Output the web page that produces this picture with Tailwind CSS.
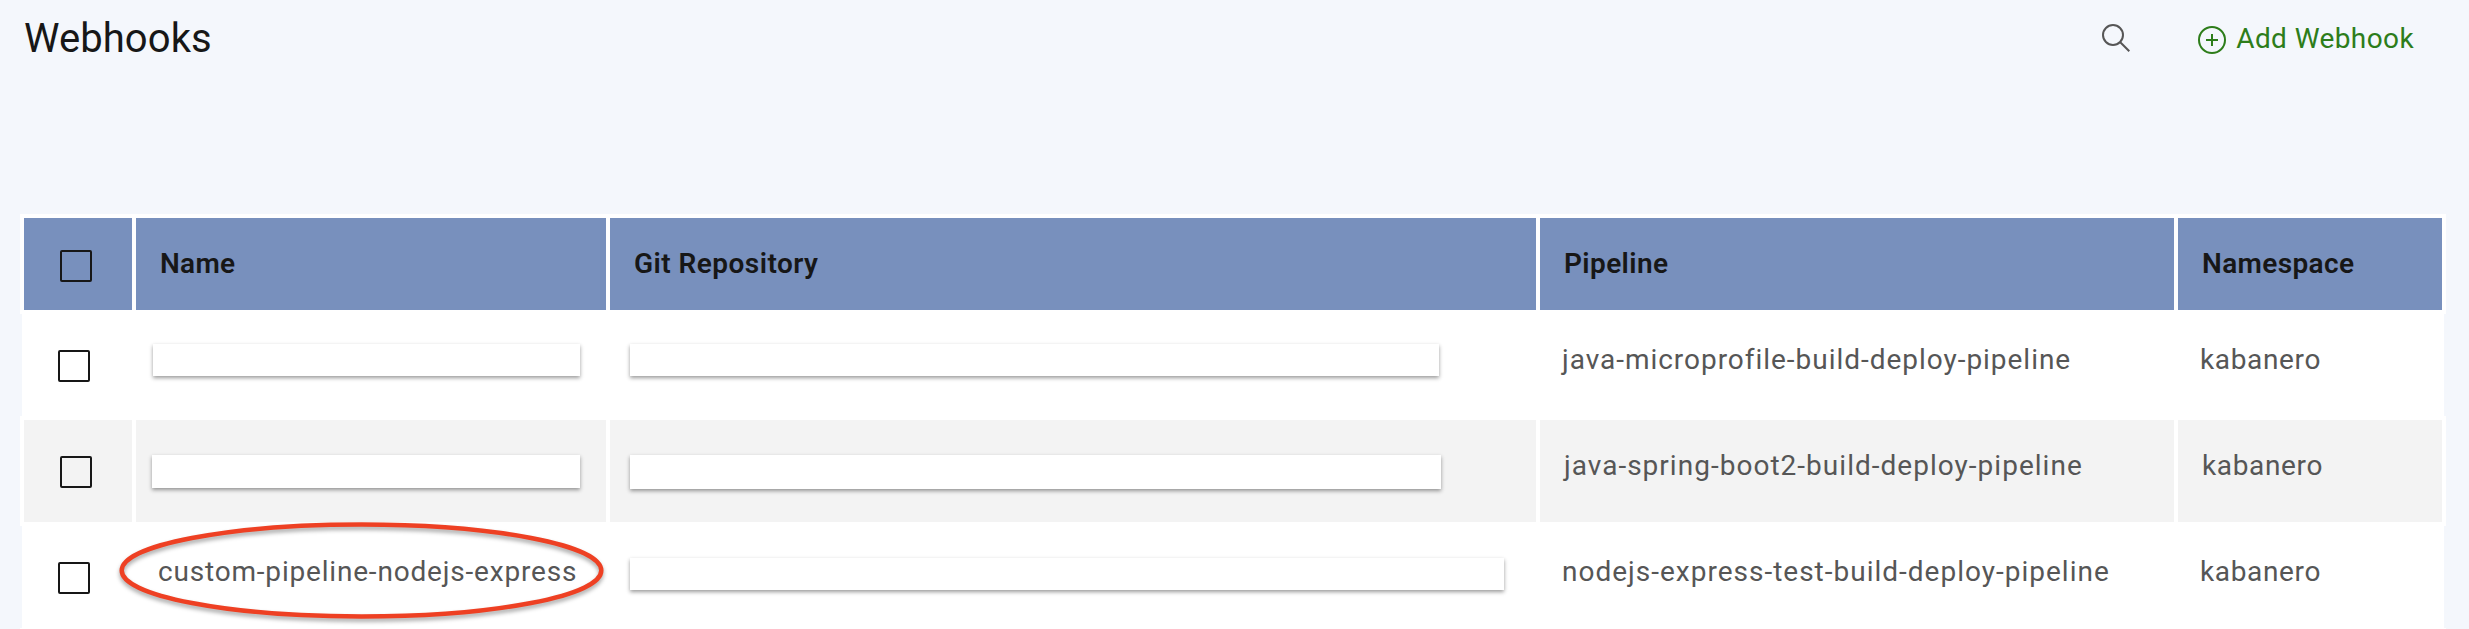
<!DOCTYPE html>
<html lang="en">
<head>
<meta charset="utf-8">
<title>Webhooks</title>
<script src="https://cdn.jsdelivr.net/npm/@tailwindcss/browser@4"></script>
</head>
<body class="h-[629px] overflow-hidden bg-[#f4f7fc] font-['Roboto',sans-serif] text-[28px] leading-9 text-[#565656]">
  <header class="flex h-[214px] items-start justify-between pr-[55px] pl-6">
    <h1 class="pt-[13px] text-[40px] leading-[52px] tracking-[0.07px] text-[#171717]">Webhooks</h1>
    <div class="flex items-start">
      <button class="mt-[23px] mr-[67px]" aria-label="Search">
        <svg class="block size-[30px]" viewBox="0 0 30 30" fill="none" stroke="#565656" stroke-width="2"><circle cx="12" cy="12" r="10"/><path d="M19 19l9.3 9.3"/></svg>
      </button>
      <button class="flex items-start text-[#2d7d1a]">
        <svg class="mt-[26px] mr-[10px] block size-7" viewBox="0 0 28 28" fill="none" stroke="currentColor" stroke-width="2"><circle cx="14" cy="14" r="13"/><path d="M14 8v12M8 14h12"/></svg>
        <span class="mt-[21px] tracking-[0.4px]">Add Webhook</span>
      </button>
    </div>
  </header>

  <main class="ml-5 w-[2426px]">
    <div class="grid grid-cols-[108px_470px_926px_634px_264px] gap-x-1 border-4 border-white bg-white font-semibold text-[#171717] *:h-[92px] *:bg-[#7890bd]">
      <div class="pt-8 pl-9"><div class="size-8 rounded-xs border-2 border-[#171717]"></div></div>
      <div class="pt-7 pl-6 tracking-[0.3px]">Name</div>
      <div class="pt-7 pl-6 tracking-[0.46px]">Git Repository</div>
      <div class="pt-7 pl-6 tracking-[0.39px]">Pipeline</div>
      <div class="pt-7 pl-6 tracking-[0.37px]">Namespace</div>
    </div>

    <div class="mx-0.5 grid h-[102px] grid-cols-[112px_474px_930px_638px_268px] bg-white">
      <div class="pt-9 pl-9"><div class="size-8 rounded-xs border-2 border-[#171717]"></div></div>
      <div class="pt-[30px] pl-[19px]"><div class="h-[32px] w-[427px] bg-white shadow-[0_2px_4px_rgba(0,0,0,0.4)]"></div></div>
      <div class="pt-[30px] pl-[22px]"><div class="h-[32px] w-[809px] bg-white shadow-[0_2px_4px_rgba(0,0,0,0.4)]"></div></div>
      <div class="pt-7 pl-6 tracking-[0.97px]">java-microprofile-build-deploy-pipeline</div>
      <div class="pt-7 pl-6 tracking-[0.65px]">kabanero</div>
    </div>

    <div class="grid grid-cols-[108px_470px_926px_634px_264px] gap-x-1 border-4 border-white bg-white *:h-[102px] *:bg-[#f3f3f3]">
      <div class="pt-9 pl-9"><div class="size-8 rounded-xs border-2 border-[#171717]"></div></div>
      <div class="pt-[35px] pl-4"><div class="h-[33px] w-[428px] bg-white shadow-[0_2px_4px_rgba(0,0,0,0.4)]"></div></div>
      <div class="pt-[35px] pl-5"><div class="h-[34px] w-[811px] bg-white shadow-[0_2px_4px_rgba(0,0,0,0.4)]"></div></div>
      <div class="pt-7 pl-6 tracking-[1.02px]">java-spring-boot2-build-deploy-pipeline</div>
      <div class="pt-7 pl-6 tracking-[0.65px]">kabanero</div>
    </div>

    <div class="mx-0.5 grid h-[102px] grid-cols-[112px_474px_930px_638px_268px] bg-white">
      <div class="pt-9 pl-9"><div class="size-8 rounded-xs border-2 border-[#171717]"></div></div>
      <div class="relative pt-7 pl-6 tracking-[0.81px]">custom-pipeline-nodejs-express
        <svg class="absolute -top-2 -left-5 h-[112px] w-[500px]" viewBox="0 0 500 112" fill="none" stroke="#ee4023" stroke-width="4.5">
          <g class="drop-shadow-[0_3px_2px_rgba(0,0,0,0.35)]"><ellipse cx="247.5" cy="52.5" rx="239.8" ry="46"/></g>
        </svg>
      </div>
      <div class="pt-[32px] pl-[22px]"><div class="h-[32px] w-[874px] bg-white shadow-[0_2px_4px_rgba(0,0,0,0.4)]"></div></div>
      <div class="pt-7 pl-6 tracking-[1px]">nodejs-express-test-build-deploy-pipeline</div>
      <div class="pt-7 pl-6 tracking-[0.65px]">kabanero</div>
    </div>
    <div class="h-1 bg-white"></div>
  </main>
</body>
</html>
